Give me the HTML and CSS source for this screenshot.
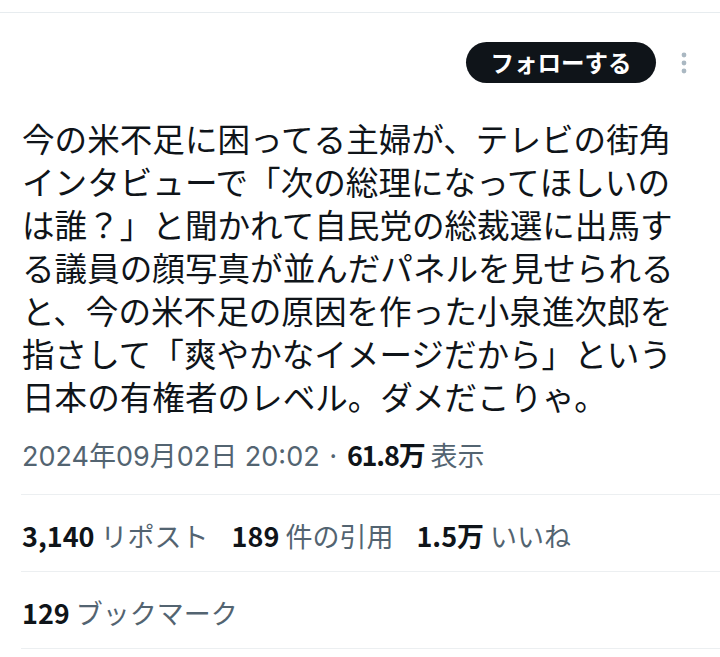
FILE: index.html
```html
<!DOCTYPE html>
<html lang="ja">
<head>
<meta charset="utf-8">
<link rel="stylesheet" href="styles.css">
</head>
<body>
<div class="page">
  <div class="topbar"></div>
  <div class="head">
    <button class="follow">フォローする</button>
    <svg class="more" width="10" height="24" viewBox="0 0 10 24" aria-hidden="true">
      <circle cx="5" cy="4" r="2.4"/>
      <circle cx="5" cy="12" r="2.4"/>
      <circle cx="5" cy="20" r="2.4"/>
    </svg>
  </div>
  <p class="tweet">今の米不足に困ってる主婦が、テレビの街角インタビューで「次の総理になってほしいのは誰？」と聞かれて自民党の総裁選に出馬する議員の顔写真が並んだパネルを見せられると、今の米不足の原因を作った小泉進次郎を指さして「爽やかなイメージだから」という日本の有権者のレベル。ダメだこりゃ。</p>
  <div class="meta"><span class="date">2024年09月02日 20:02</span> · <b>61.8万</b> 表示</div>
  <div class="row">
    <span class="stat"><b>3,140</b> リポスト</span>
    <span class="stat"><b>189</b> 件の引用</span>
    <span class="stat"><b>1.5万</b> いいね</span>
  </div>
  <div class="row last">
    <span class="stat"><b>129</b> ブックマーク</span>
  </div>
</div>
</body>
</html>
```
FILE: styles.css
```css
html, body {
  margin: 0;
  padding: 0;
  background: #ffffff;
}
body {
  font-family: "Noto Sans CJK JP", "Noto Sans", sans-serif;
  color: #0f1419;
}
.page {
  width: 720px;
}
.topbar {
  height: 12px;
  border-bottom: 1px solid #e7ecef;
}
.head {
  display: flex;
  justify-content: flex-end;
  align-items: center;
  padding: 29px 31px 0 0;
  gap: 23px;
}
.follow {
  height: 41px;
  width: 190px;
  border: none;
  border-radius: 21px;
  background: #0f1419;
  color: #ffffff;
  font-family: "Noto Sans CJK JP", sans-serif;
  font-weight: 700;
  font-size: 23.5px;
  padding: 0;
  line-height: 41px;
}
.more {
  fill: #aab8c2;
}
.tweet {
  margin: 33px 0 0 22px;
  width: 670px;
  font-size: 32.6px;
  line-height: 43px;
}
.meta {
  margin: 20px 0 0 22px;
  font-size: 27px;
  line-height: 36px;
  color: #536471;
  padding-bottom: 19px;
}
.date {
  font-family: "Inter", "Noto Sans CJK JP", sans-serif;
}
.meta b {
  color: #0f1419;
  font-weight: 700;
  letter-spacing: -1.2px;
}
.row {
  margin-left: 21px;
  border-top: 1px solid #eceff1;
  padding: 23px 0 17px 1px;
  display: flex;
  gap: 23px;
  font-size: 27px;
  line-height: 36px;
  color: #536471;
}
.row.last {
  border-bottom: 1px solid #eceff1;
}
.stat b {
  color: #0f1419;
  font-weight: 700;
}
```
